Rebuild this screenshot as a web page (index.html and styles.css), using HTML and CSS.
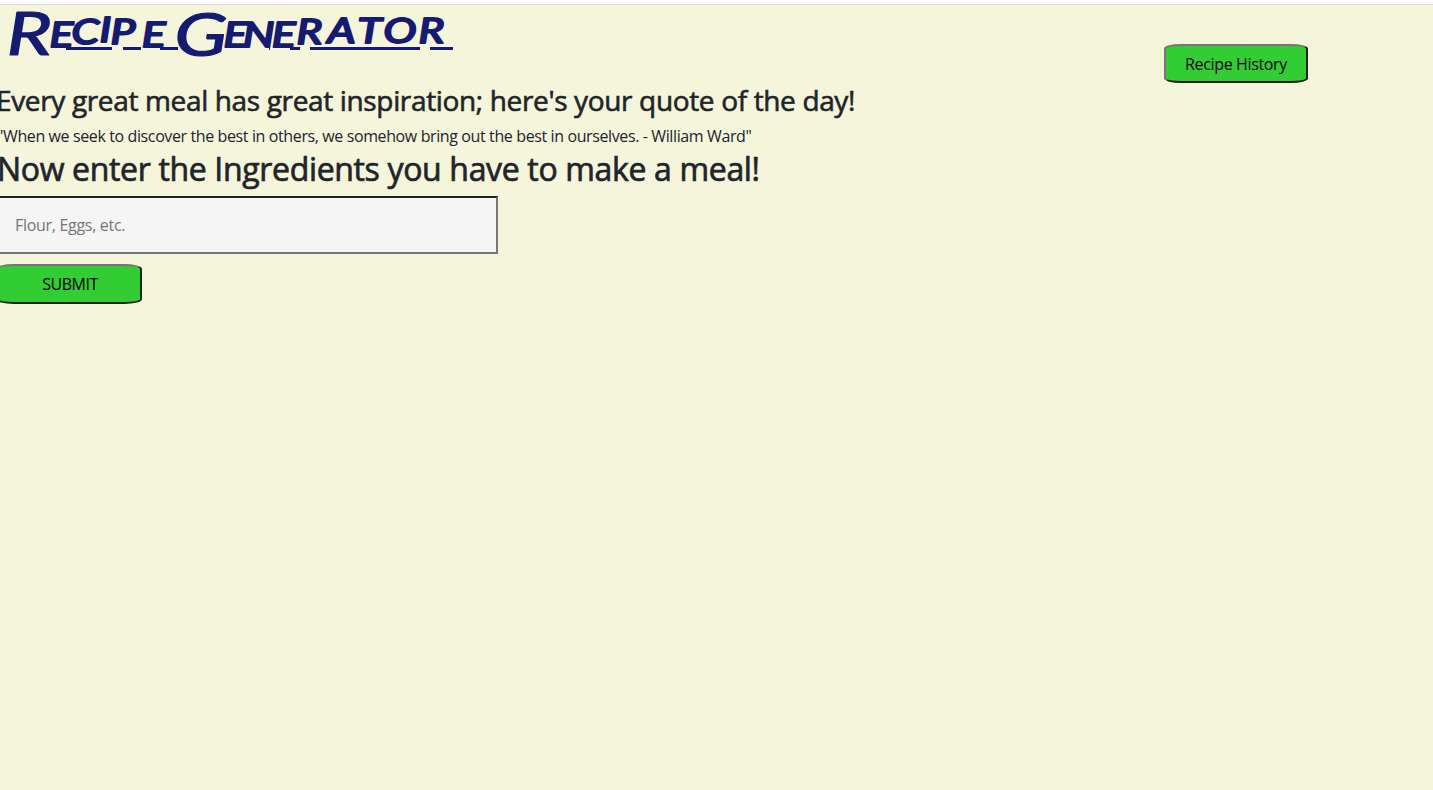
FILE: index.html
```html
<!DOCTYPE html>
<html lang="en">
<head>
<meta charset="utf-8">
<title>Recipe Generator</title>
<link rel="stylesheet" href="styles.css">
</head>
<body>
<header class="header">
<h1 class="title">
<svg class="wordmark" width="480" height="60" viewBox="0 0 480 60" role="img" aria-label="Recipe Generator">
<path class="wordmark-underline" d="M66 43.5H112M123 43.5H141M160 43.5H178M215 43.5H218M269 43.5H270M290 43.5H300M310 43.5H420M430 43.5H453"/>
<g transform="scale(1.3 1)">
<text class="letters"><tspan class="capital" x="5" y="50">R</tspan><tspan x="38 55 76.5 85 109" y="42 39 37 39 42">ECIPE</tspan> <tspan class="capital" x="134" y="51">G</tspan><tspan x="172 187 209 228 252 275 295 322" y="42 42 42 39 38 38 38 38">ENERATOR</tspan></text>
</g>
</svg>
</h1>
<button class="btn history">Recipe History</button>
</header>
<main class="main">
<h3 class="quote-heading">Every great meal has great inspiration; here's your quote of the day!</h3>
<p class="quote">"When we seek to discover the best in others, we somehow bring out the best in ourselves. - William Ward"</p>
<h2 class="prompt">Now enter the Ingredients you have to make a meal!</h2>
<input class="ingredients" type="text" placeholder="Flour, Eggs, etc.">
<button class="btn submit">SUBMIT</button>
</main>
</body>
</html>
```
FILE: styles.css
```css
* { box-sizing: border-box; }
body {
  margin: 0;
  height: 790px;
  overflow: hidden;
  background: beige;
  color: #212529;
  font-family: "Segoe UI", "Open Sans", "Noto Sans", sans-serif;
  border-top: 4px solid #fff;
}
.header {
  display: flex;
  justify-content: space-between;
  height: 80px;
  padding-right: 125px;
  border-top: 1px solid #dcdce0;
}
.title { margin: 0; height: 60px; }
.wordmark { display: block; overflow: visible; }
.wordmark-underline { fill: none; stroke: #151b70; stroke-width: 3; }
.letters {
  fill: #151b70;
  stroke: #151b70;
  stroke-width: 2;
  stroke-linejoin: round;
  font-family: Lato, sans-serif;
  font-size: 34px;
  font-style: italic;
  font-weight: 400;
}
.capital { font-size: 60px; stroke-width: 1.2; }
.btn {
  display: block;
  width: 144px;
  height: 39px;
  padding: 0;
  border: 2px solid;
  border-color: #767676 #212121 #212121 #767676;
  border-radius: 12%;
  background: limegreen;
  color: #000;
  font: 400 16px "Segoe UI", "Open Sans", sans-serif;
}
.history { margin-top: 39px; letter-spacing: -0.35px; }
.main { margin-left: -4px; }
.quote-heading {
  margin: 0;
  height: 40px;
  font-size: 28px;
  font-weight: 400;
  line-height: 33px;
  letter-spacing: -0.35px;
  white-space: nowrap;
  -webkit-text-stroke: 0.6px #212529;
}
.quote {
  margin: 0;
  height: 24px;
  padding-left: 1px;
  font-size: 16px;
  line-height: 24px;
  letter-spacing: -0.385px;
  white-space: nowrap;
}
.prompt {
  margin: 0;
  height: 48px;
  padding-left: 1px;
  font-size: 32px;
  font-weight: 400;
  line-height: 42px;
  letter-spacing: -0.34px;
  white-space: nowrap;
  -webkit-text-stroke: 0.7px #212529;
}
.ingredients {
  display: block;
  width: 502px;
  height: 58px;
  padding: 0 17px;
  border: 2px solid;
  border-color: #212121 #767676 #767676 #212121;
  border-radius: 0;
  background: whitesmoke;
  font: 400 16px "Segoe UI", "Open Sans", sans-serif;
  letter-spacing: -0.3px;
}
.ingredients::placeholder { color: #757575; }
.submit { margin-top: 10px; width: 146px; height: 40px; padding-left: 2px; letter-spacing: -0.5px; }
```
